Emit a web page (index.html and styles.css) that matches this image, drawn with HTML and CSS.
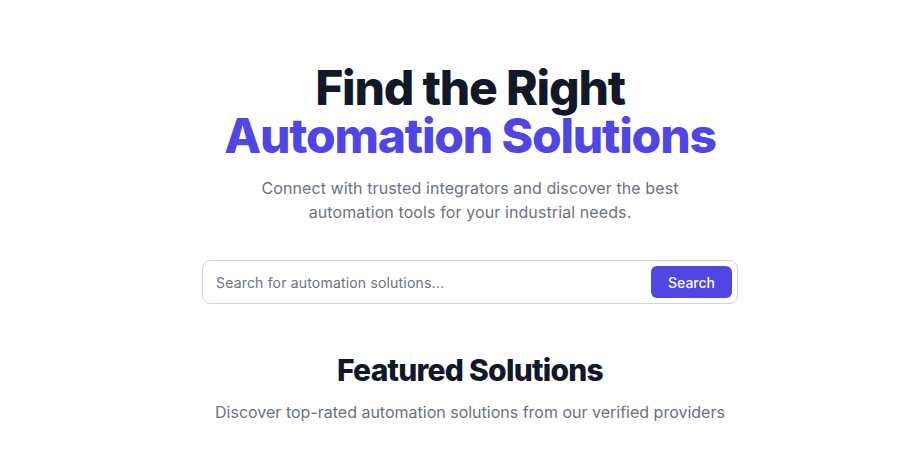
FILE: index.html
```html
<!DOCTYPE html>
<html lang="en">
<head>
<meta charset="utf-8">
<title>Find the Right Automation Solutions</title>
<link rel="stylesheet" href="styles.css">
</head>
<body>
<main class="page">
  <section class="hero">
    <h1 class="hero-title">Find the Right<br><span class="accent">Automation Solutions</span></h1>
    <p class="hero-sub">Connect with trusted integrators and discover the best automation tools for your industrial needs.</p>
    <form class="search" onsubmit="return false">
      <input class="search-input" type="text" placeholder="Search for automation solutions...">
      <button class="search-btn" type="submit">Search</button>
    </form>
  </section>
  <section class="featured">
    <h2 class="featured-title">Featured Solutions</h2>
    <p class="featured-sub">Discover top-rated automation solutions from our verified providers</p>
  </section>
</main>
</body>
</html>
```
FILE: styles.css
```css
* { box-sizing: border-box; }
html, body { margin: 0; padding: 0; background: #ffffff; }
body { font-family: Inter, "Noto Sans", sans-serif; color: #111827; }
.page { display: flex; flex-direction: column; align-items: center; padding: 64px 0 0 37px; }
.hero { display: flex; flex-direction: column; align-items: center; text-align: center; }
.hero-title { margin: 0; font-size: 48px; line-height: 48px; font-weight: 800; letter-spacing: -0.025em; color: #111827; }
.accent { color: #4f46e5; }
.hero-sub { margin: 16px 0 0; max-width: 448px; font-size: 16px; line-height: 24px; letter-spacing: 0.1px; color: #6b7280; }
.search { margin-top: 36px; width: 536px; height: 44px; display: flex; align-items: center; border: 1px solid #d1d5db; border-radius: 8px; padding: 0 5px 0 13px; background: #fff; }
.search-input { flex: 1; border: none; outline: none; font-family: inherit; font-size: 14px; letter-spacing: 0.18px; color: #111827; background: transparent; padding: 0; }
.search-input::placeholder { color: #6b7280; }
.search-btn { width: 81px; height: 32px; border: none; border-radius: 6px; background: #4f46e5; color: #fff; font-family: inherit; font-size: 14px; font-weight: 500; }
.featured { display: flex; flex-direction: column; align-items: center; text-align: center; margin-top: 48px; }
.featured-title { margin: 0; font-size: 30px; line-height: 36px; font-weight: 800; letter-spacing: -0.025em; color: #111827; }
.featured-sub { margin: 12px 0 0; font-size: 16px; line-height: 24px; color: #6b7280; }
```
